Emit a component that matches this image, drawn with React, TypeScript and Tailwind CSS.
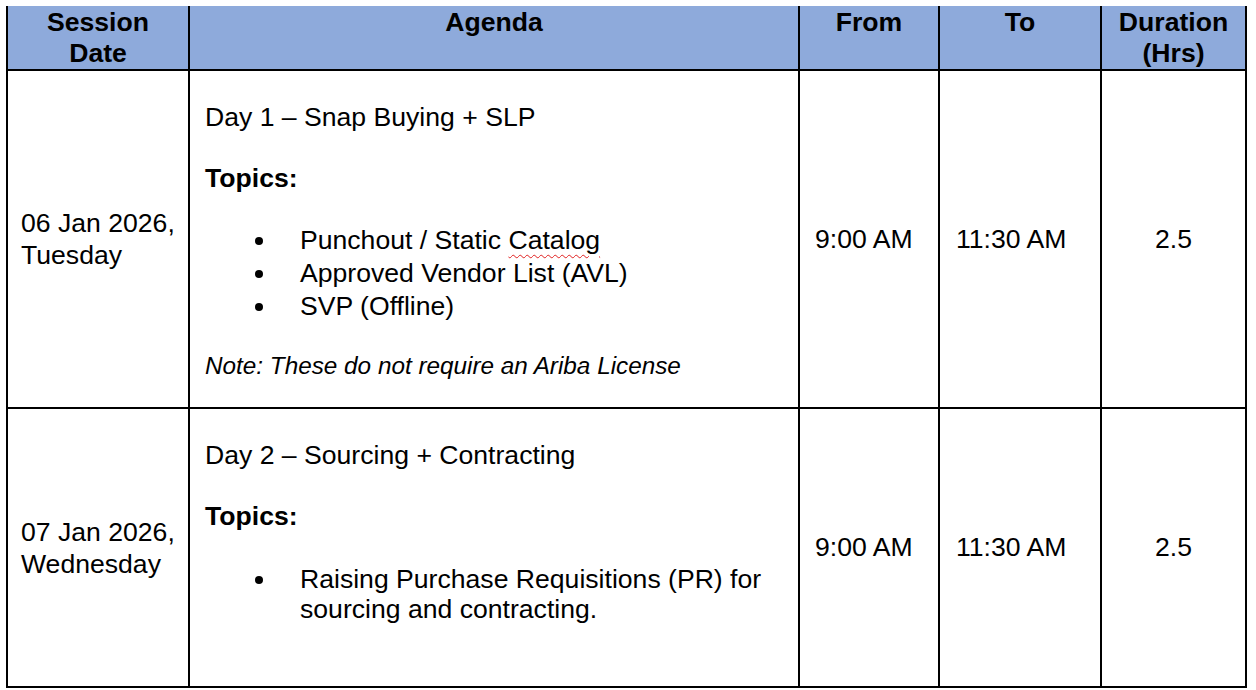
const cell = 'border-2 border-black align-middle';

export default function App() {
    return (
        <div className="w-[1256px] h-[690px] bg-white pl-[6px] pt-[6px]" style={{ fontFamily: '"Liberation Sans", Arial, sans-serif' }}>
            <table className="border-collapse text-black text-[26.6px] leading-[33px] table-fixed w-[1239px]">
                <colgroup>
                    <col className="w-[182px]" />
                    <col className="w-[610px]" />
                    <col className="w-[140px]" />
                    <col className="w-[162px]" />
                    <col className="w-[145px]" />
                </colgroup>
                <thead>
                    <tr className="h-[63px] bg-[#8eaadb]">
                        {['Session Date', 'Agenda', 'From', 'To', 'Duration (Hrs)'].map(h => (
                            <th key={h} className="border-2 border-t-0 border-black align-top text-center font-bold leading-[31px] pt-[1px] px-2">
                                {h}
                            </th>
                        ))}
                    </tr>
                </thead>
                <tbody>
                    {/* Day 1 */}
                    <tr className="h-[338px]">
                        <td className={`${cell} pl-[13px] leading-[32px]`}>
                            06 Jan 2026,<br />Tuesday
                        </td>
                        <td className="border-2 border-black align-top pl-[15px] pr-4 pt-[30px]">
                            <p>Day 1 – Snap Buying + SLP</p>
                            <p className="mt-[28px] font-bold">Topics:</p>
                            <ul className="mt-[29px]">
                                {['Punchout / Static Catalog', 'Approved Vendor List (AVL)', 'SVP (Offline)'].map(t => (
                                    <li key={t} className="flex items-center">
                                        <span className="w-[50px] shrink-0" />
                                        <span className="w-[8px] h-[8px] rounded-full bg-black shrink-0" />
                                        <span className="w-[37px] shrink-0" />
                                        {t === 'Punchout / Static Catalog' ? (
                                            <span>
                                                Punchout / Static{' '}
                                                <span className="underline decoration-wavy decoration-[#e02020] decoration-1 underline-offset-[5px]">Catalog</span>
                                            </span>
                                        ) : (
                                            <span>{t}</span>
                                        )}
                                    </li>
                                ))}
                            </ul>
                            <p className="mt-[29px] italic text-[24.3px] leading-[28px]">
                                Note: These do not require an Ariba License
                            </p>
                        </td>
                        <td className={`${cell} pl-[15px]`}>9:00 AM</td>
                        <td className={`${cell} pl-[16px]`}>11:30 AM</td>
                        <td className={`${cell} text-center`}>2.5</td>
                    </tr>

                    {/* Day 2 */}
                    <tr className="h-[279px]">
                        <td className={`${cell} pl-[13px] leading-[32px]`}>
                            07 Jan 2026,<br />Wednesday
                        </td>
                        <td className="border-2 border-black align-top pl-[15px] pr-4 pt-[30px]">
                            <p>Day 2 – Sourcing + Contracting</p>
                            <p className="mt-[28px] font-bold">Topics:</p>
                            <div className="mt-[31px] flex items-start">
                                <span className="w-[50px] shrink-0" />
                                <span className="w-[8px] h-[8px] rounded-full bg-black shrink-0 mt-[12px]" />
                                <span className="w-[37px] shrink-0" />
                                <span className="leading-[30px]">
                                    Raising Purchase Requisitions (PR) for<br />sourcing and contracting.
                                </span>
                            </div>
                        </td>
                        <td className={`${cell} pl-[15px]`}>9:00 AM</td>
                        <td className={`${cell} pl-[16px]`}>11:30 AM</td>
                        <td className={`${cell} text-center`}>2.5</td>
                    </tr>
                </tbody>
            </table>
        </div>
    );
}
